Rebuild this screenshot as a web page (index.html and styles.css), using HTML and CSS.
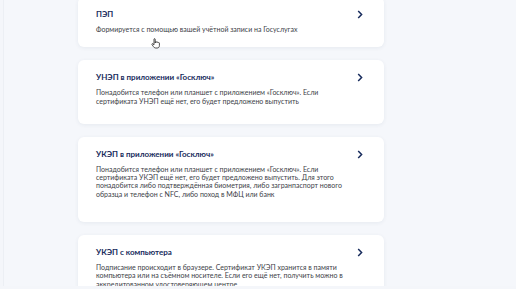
FILE: index.html
```html
<!DOCTYPE html>
<html lang="ru">

<head>
  <meta charset="UTF-8">
  <meta name="viewport" content="width=device-width, initial-scale=1.0">
  <title>Виды электронной подписи</title>
  <link rel="stylesheet" href="styles.css">
</head>

<body>

  <div class="page">
    <div class="sign-list">

      <a class="sign-card short" href="#">
        <div class="sign-body">
          <h3 class="sign-title">ПЭП</h3>
          <p class="sign-text">Формируется с помощью вашей учётной записи на Госуслугах</p>
        </div>
        <svg class="chevron" width="6" height="9" viewBox="0 0 6 9"><path d="M1.2 1 L4.6 4.5 L1.2 8" fill="none" stroke="#172b5c" stroke-width="1.5"/></svg>
        <svg class="cursor" width="10" height="11" viewBox="0 0 10 11"><path d="M3 1.2 C3 0.5 4.2 0.5 4.2 1.2 L4.2 5 L4.4 4 C4.6 3.4 5.6 3.5 5.6 4.2 L5.8 4.4 C6 3.8 7 3.9 7 4.6 L7.2 4.8 C7.5 4.3 8.4 4.5 8.4 5.2 L8.4 7.6 C8.4 9 7.6 10 6.2 10 L4.6 10 C3.6 10 3 9.4 2.4 8.6 L1 6.6 C0.6 6 1.3 5.3 1.9 5.8 L3 6.8 Z" fill="#fff" stroke="#222" stroke-width="0.8"/></svg>
      </a>

      <a class="sign-card" href="#">
        <div class="sign-body">
          <h3 class="sign-title">УНЭП в приложении «Госключ»</h3>
          <p class="sign-text">Понадобится телефон или планшет с приложением «Госключ». Если сертификата УНЭП ещё нет, его будет предложено выпустить</p>
        </div>
        <svg class="chevron" width="6" height="9" viewBox="0 0 6 9"><path d="M1.2 1 L4.6 4.5 L1.2 8" fill="none" stroke="#172b5c" stroke-width="1.5"/></svg>
      </a>

      <a class="sign-card tall" href="#">
        <div class="sign-body">
          <h3 class="sign-title">УКЭП в приложении «Госключ»</h3>
          <p class="sign-text">Понадобится телефон или планшет с приложением «Госключ». Если сертификата УКЭП ещё нет, его будет предложено выпустить. Для этого понадобится либо подтверждённая биометрия, либо загранпаспорт нового образца и телефон с NFC, либо поход в МФЦ или банк</p>
        </div>
        <svg class="chevron" width="6" height="9" viewBox="0 0 6 9"><path d="M1.2 1 L4.6 4.5 L1.2 8" fill="none" stroke="#172b5c" stroke-width="1.5"/></svg>
      </a>

      <a class="sign-card" href="#">
        <div class="sign-body">
          <h3 class="sign-title">УКЭП с компьютера</h3>
          <p class="sign-text">Подписание происходит в браузере. Сертификат УКЭП хранится в памяти компьютера или на съёмном носителе. Если его ещё нет, получить можно в аккредитованном удостоверяющем центре</p>
        </div>
        <svg class="chevron" width="6" height="9" viewBox="0 0 6 9"><path d="M1.2 1 L4.6 4.5 L1.2 8" fill="none" stroke="#172b5c" stroke-width="1.5"/></svg>
      </a>

    </div>
  </div>

</body>

</html>
```

FILE: styles.css
```css
* {
  box-sizing: border-box;
}

body {
  margin: 0;
  background-color: #f4f6fa;
  font-family: Lato, "Noto Sans", sans-serif;
  overflow: hidden;
}

.page {
  height: 289px;
  margin-left: 3px;
  padding-left: 74px;
  background-color: #f5f7fb;
  border-left: 1px solid #eceff4;
}

.sign-list {
  width: 306px;
  margin-top: -3px;
  display: flex;
  flex-direction: column;
  gap: 13px;
}

.sign-card {
  position: relative;
  display: flex;
  align-items: flex-start;
  justify-content: space-between;
  padding: 12px 21px 19px 18px;
  background-color: #fff;
  border-radius: 6px;
  box-shadow: 0 1px 4px rgba(32, 50, 90, .07);
  text-decoration: none;
}

.sign-card.short {
  padding-bottom: 14px;
}

.sign-card.tall {
  padding-bottom: 24px;
}

.sign-body {
  width: 258px;
}

.sign-title {
  margin: 0 0 5px;
  font-size: 8px;
  line-height: 11px;
  font-weight: bold;
  color: #172b5c;
}

.sign-text {
  margin: 0;
  font-size: 7px;
  line-height: 8.3px;
  color: #3c4147;
}

.chevron {
  margin-top: 1px;
  flex-shrink: 0;
}

.cursor {
  position: absolute;
  left: 73px;
  top: 41px;
}
```
